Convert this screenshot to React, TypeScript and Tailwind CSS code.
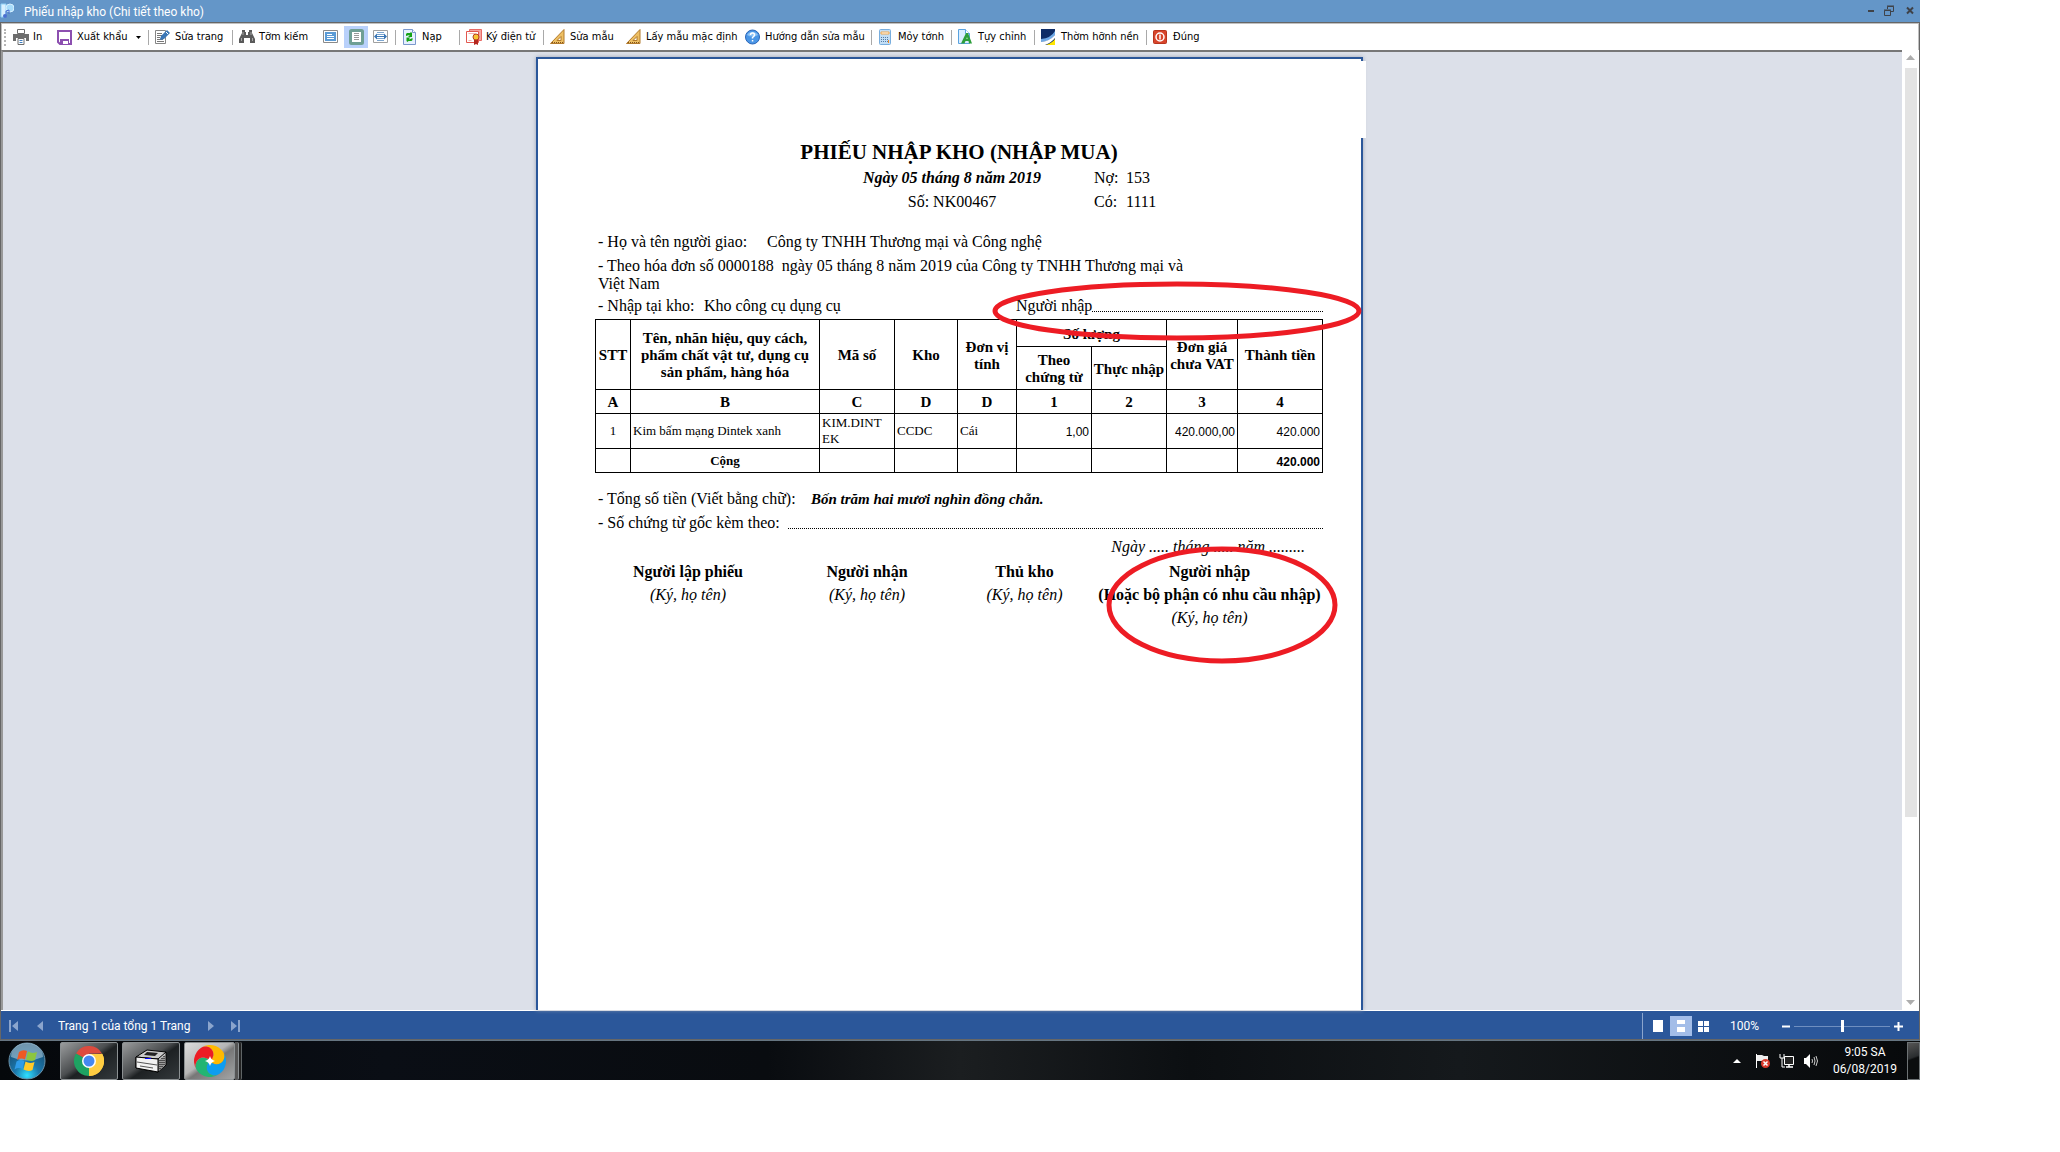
import type { ReactNode } from "react";
import clsx from "clsx";

const IconApp = () => (
	<svg width="14" height="16" viewBox="0 0 14 16">
		<path d="M1 1h5v13H1z" fill="#d9f0ff" stroke="#8fd0f5" />
		<circle cx="10" cy="5" r="4" fill="#a8dcfa" stroke="#d6f0ff" />
		<path d="M6 13V8l3-1v4" fill="none" stroke="#4a6fd0" />
		<circle cx="5" cy="13" r="2" fill="#4a6fd0" />
	</svg>
);

const IconPrint = () => (
	<svg width="16" height="16" viewBox="0 0 16 16">
		<path d="M4.500 .5h7v4h-7z" fill="#fff" stroke="#6d6d6d" />
		<path d="M0 5h16v7h-3V9H3v3H0z" fill="#6d6d6d" />
		<path d="M5 9.500h6v6H5z" fill="#fff" stroke="#6d6d6d" />
		<path d="M6.500 11.500h3M6.500 13.500h3" stroke="#3d7dbf" />
	</svg>
);

const IconSave = () => (
	<svg width="16" height="16" viewBox="0 0 16 16">
		<path d="M1 2h13v13H3l-2-2z" fill="#fff" stroke="#8c4fb0" strokeWidth="2" />
		<path d="M3 10h9v5H3z" fill="#8c4fb0" />
		<path d="M6 12h5v3H6z" fill="#fff" />
	</svg>
);

const IconEdit = () => (
	<svg width="16" height="16" viewBox="0 0 16 16">
		<path d="M.5 1.500h10v13H.5z" fill="#fff" stroke="#858585" />
		<path d="M2 4.500h5M2 6.500h5M2 8.500h3M2 10.500h6M2 12.500h7" stroke="#777" />
		<path d="M5 10l1-3 6-6 3 3-6 6-3 1z" fill="#3a76b5" />
		<path d="M11 3l2 2" stroke="#fff" />
	</svg>
);

const IconSearch = () => (
	<svg width="16" height="16" viewBox="0 0 16 16">
		<path d="M3 1h3v2h1v3h2V3h1V1h3v3l3 6v4h-5V9H5v5H0v-4l3-6z" fill="#5a5a5a" />
		<path d="M4 3v3M12 3v3M2.500 9v3M13.500 9v3" stroke="#a5a5a5" />
	</svg>
);

const IconPageWidth = () => (
	<svg width="15" height="14" viewBox="0 0 15 14">
		<path d="M.5.5h14v12H.5z" fill="#fff" stroke="#8a8a8a" />
		<path d="M2 2h11v9H2z" fill="#5b9bd5" />
		<path d="M4 4.500h5M4 6.500h7M4 8.500h7" stroke="#fff" />
	</svg>
);

const IconWholePage = () => (
	<svg width="15" height="16" viewBox="0 0 15 16">
		<rect x="1.500" y="1.500" width="12" height="13" rx="1" fill="#fff" stroke="#6f9f94" strokeWidth="3" />
		<path d="M5 4.500h5M5 6.500h5M5 8.500h5M5 10.500h5" stroke="#9a9a9a" />
	</svg>
);

const IconFitText = () => (
	<svg width="15" height="14" viewBox="0 0 15 14">
		<path d="M.5.5h14v12H.5z" fill="#fff" stroke="#a0a0a0" />
		<path d="M4 2.500h7M4 4.500h7M4 8.500h7M4 10.500h7" stroke="#7ba5d0" />
		<path d="M1 6.500l3-3v2.500h7V3.500l3 3-3 3V7H4v2.500z" fill="#3a76b5" />
	</svg>
);

const IconReload = () => (
	<svg width="16" height="16" viewBox="0 0 16 16">
		<path d="M1.500.5h9l3 3v12h-12z" fill="#e6f0ff" stroke="#7a98cc" />
		<path d="M10.500.5v3h3" fill="#fff" stroke="#7a98cc" />
		<path d="M4 7V5l1-1h3l1-1 1 1v4H6l1.500-1.500V6zM10.500 9v2l-1 1h-3l-1 1-1-1V8.500h4L7 10v.5z" fill="#16a316" />
	</svg>
);

const IconSign = () => (
	<svg width="16" height="16" viewBox="0 0 16 16">
		<path d="M3.500.5h12v11h-12z" fill="#f4a6a0" stroke="#e86a64" />
		<path d="M.5 2.500h12v11H.5z" fill="#fff" stroke="#e2574f" />
		<path d="M2.500 4.500h7M2.500 11.500h3" stroke="#f3b5b0" />
		<path d="M8 10h4v6l-2-1-2 1z" fill="#b3261e" />
		<circle cx="10" cy="8" r="3" fill="#f6c433" stroke="#b8401f" />
	</svg>
);

const IconRuler = () => (
	<svg width="16" height="16" viewBox="0 0 16 16">
		<path d="M14 .5V14.500H.5z" fill="#edbf63" stroke="#b27a2c" />
		<path d="M11 7.500v4H7z" fill="#fff" stroke="#b27a2c" />
		<path d="M2 13.500h11" stroke="#80521c" strokeDasharray="1 1" />
	</svg>
);

const IconHelp = () => (
	<svg width="16" height="16" viewBox="0 0 16 16">
		<circle cx="7.500" cy="8" r="7" fill="#4a96e6" stroke="#2b66b8" />
		<path d="M2 6a6 5 0 0 1 11 0q-6 3-11 0" fill="#8cc2f5" />
		<path d="M5.500 6q0-2 2-2t2 2q0 1-2 2.500v1" fill="none" stroke="#fff" strokeWidth="1.500" />
		<path d="M6.800 11h1.500v1.500H6.800z" fill="#fff" />
	</svg>
);

const IconCalculator = () => (
	<svg width="16" height="16" viewBox="0 0 16 16">
		<rect x="1.500" y=".5" width="11" height="15" rx="1" fill="#c3def5" stroke="#78aede" />
		<path d="M3 3h8v2H3z" fill="#fff" stroke="#f0a64a" />
		<path d="M3 8.500h8M3 10.500h8M3 12.500h8" stroke="#557da5" strokeDasharray="1 1" />
		<path d="M10 11h1v3h-1z" fill="#f08a24" />
	</svg>
);

const IconCustomize = () => (
	<svg width="16" height="16" viewBox="0 0 16 16">
		<path d="M.5.5h7l4 4v10H.5z" fill="#d9edff" stroke="#5aa3e0" />
		<path d="M7.500.5v4h4" fill="#fff" stroke="#5aa3e0" />
		<path d="M3 14.500L8 4h2l4 10.500h-3L10.500 12h-3l-1 2.500z" fill="#2c9e3a" />
		<path d="M8.500 10h1L9 8z" fill="#fff" />
	</svg>
);

const IconBackground = () => (
	<svg width="14" height="16" viewBox="0 0 14 16">
		<path d="M0 0h14v16H0z" fill="#0e2c66" />
		<path d="M0 10Q10 9 14 2v4Q9 13 0 13z" fill="#6fa9e6" />
		<path d="M0 13Q9 12 14 6v3Q10 14 4 16H0z" fill="#fff" />
		<path d="M5 16q6-2 9-6v6z" fill="#ffe600" />
	</svg>
);

const IconClose = () => (
	<svg width="14" height="16" viewBox="0 0 14 16">
		<rect x=".5" y="1.500" width="13" height="13" rx="1" fill="#d8452b" stroke="#b8341d" />
		<circle cx="7" cy="8" r="4" fill="none" stroke="#fff" strokeWidth="1.500" />
		<path d="M7 5.500v5" stroke="#fff" strokeWidth="1.500" />
	</svg>
);

type ToolButtonProps = {
	icon: ReactNode;
	title: string;
	className: string;
	iconOnly?: boolean;
};

const ToolButton: React.FC<ToolButtonProps> = ({ icon, title, className, iconOnly }) => (
	<button
		type="button"
		aria-label={title}
		className={clsx("flex h-[22px] shrink-0 items-center whitespace-nowrap", className)}
	>
		<span className={clsx("flex shrink-0", !iconOnly && "w-5")}>{icon}</span>
		{!iconOnly && title}
	</button>
);

const Separator = () => <span className="mr-1.5 h-[15px] w-px shrink-0 bg-[#a9a9a9]" />;

const TitleBar = () => (
	<header className="flex h-[22px] items-center bg-[#6496c8] text-white">
		<IconApp />
		<h1 className="ml-2.5 pt-0.5 font-['Roboto',sans-serif] text-[12px] leading-4">
			Phiếu nhập kho (Chi tiết theo kho)
		</h1>
		<div className="mr-1 ml-auto flex h-full items-center gap-2">
			<button type="button" aria-label="Minimize">
				<svg width="8" height="12" viewBox="0 0 8 12">
					<path d="M1 5h6v2H1z" fill="#3f4248" />
				</svg>
			</button>
			<button type="button" aria-label="Restore">
				<svg width="12" height="12" viewBox="0 0 12 12">
					<path d="M4.500 4V1.500h6v5H8M4 1h7" fill="none" stroke="#3f4248" />
					<path d="M1.500 5.500h6v5h-6zM1 5h7" fill="none" stroke="#3f4248" />
				</svg>
			</button>
			<button type="button" aria-label="Close" className="ml-0.5">
				<svg width="11" height="12" viewBox="0 0 11 12">
					<path d="M2 2.500l6 6M8 2.500l-6 6" stroke="#3f4248" strokeWidth="2" />
				</svg>
			</button>
		</div>
	</header>
);

const Toolbar = () => (
	<div
		role="toolbar"
		className="flex h-[27px] items-center border-x border-t border-[#c0c0c0] bg-white font-['DejaVu_Sans_Condensed','DejaVu_Sans',sans-serif] text-[11px] text-black"
	>
		<span className="mr-[7px] ml-[2px] h-[17px] shrink-0 border-l-2 border-dotted border-[#b5b5b5]" />
		<ToolButton icon={<IconPrint />} title="In" className="w-11" />
		<ToolButton icon={<IconSave />} title="Xuất khẩu" className="w-[79px]" />
		<button type="button" aria-label="Xuất khẩu: tùy chọn" className="w-3">
			<svg width="5" height="3" viewBox="0 0 5 3">
				<path d="M0 0h5L2.500 3z" fill="#000" />
			</svg>
		</button>
		<Separator />
		<ToolButton icon={<IconEdit />} title="Sửa trang" className="w-[77px]" />
		<Separator />
		<ToolButton icon={<IconSearch />} title="Tỡm kiếm" className="w-[84px]" />
		<ToolButton icon={<IconPageWidth />} title="Vừa chiều rộng" className="w-[21px]" iconOnly />
		<ToolButton
			icon={<IconWholePage />}
			title="Toàn trang"
			className="w-6 justify-center bg-[#b9d1fb]"
			iconOnly
		/>
		<ToolButton icon={<IconFitText />} title="Vừa nội dung" className="w-[27px] pl-[5px]" iconOnly />
		<Separator />
		<ToolButton icon={<IconReload />} title="Nạp" className="w-[57px]" />
		<Separator />
		<ToolButton icon={<IconSign />} title="Ký điện tử" className="w-[77px]" />
		<Separator />
		<ToolButton icon={<IconRuler />} title="Sửa mẫu" className="w-[76px]" />
		<ToolButton icon={<IconRuler />} title="Lấy mẫu mặc định" className="w-[119px]" />
		<ToolButton icon={<IconHelp />} title="Hướng dẫn sửa mẫu" className="w-[126px]" />
		<Separator />
		<ToolButton icon={<IconCalculator />} title="Mỏy tớnh" className="w-[73px]" />
		<Separator />
		<ToolButton icon={<IconCustomize />} title="Tựy chỉnh" className="w-[76px]" />
		<Separator />
		<ToolButton icon={<IconBackground />} title="Thờm hỡnh nền" className="w-[105px]" />
		<Separator />
		<ToolButton icon={<IconClose />} title="Đúng" className="w-[50px]" />
	</div>
);

const Th: React.FC<React.ComponentProps<"th">> = ({ children, ...rest }) => (
	<th className="border border-black px-0 pt-0.5 pb-0 text-center align-middle font-bold" {...rest}>
		{children}
	</th>
);

const Td: React.FC<{ children?: ReactNode; className?: string }> = ({ children, className }) => (
	<td className={clsx("border border-black px-[2px] py-0", className)}>{children}</td>
);

const AmountCell: React.FC<{ value: string }> = ({ value }) => (
	<Td className="pt-0.5 text-right font-['Liberation_Sans',sans-serif] text-[12px]">{value}</Td>
);

const ReceiptTable = () => (
	<table className="mt-px w-full table-fixed border-collapse text-[15px] leading-[17px]">
		<colgroup>
			<col className="w-[35px]" />
			<col className="w-[189px]" />
			<col className="w-[75px]" />
			<col className="w-[63px]" />
			<col className="w-[59px]" />
			<col className="w-[75px]" />
			<col className="w-[75px]" />
			<col className="w-[71px]" />
			<col />
		</colgroup>
		<thead>
			<tr className="h-[27px]">
				<Th rowSpan={2}>STT</Th>
				<Th rowSpan={2}>
					Tên, nhãn hiệu, quy cách,
					<br />
					phẩm chất vật tư, dụng cụ
					<br />
					sản phẩm, hàng hóa
				</Th>
				<Th rowSpan={2}>Mã số</Th>
				<Th rowSpan={2}>Kho</Th>
				<Th rowSpan={2}>Đơn vị tính</Th>
				<Th colSpan={2}>Số lượng</Th>
				<Th rowSpan={2}>
					Đơn giá
					<br />
					chưa VAT
				</Th>
				<Th rowSpan={2}>Thành tiền</Th>
			</tr>
			<tr className="h-[43px]">
				<Th>
					Theo
					<br />
					chứng từ
				</Th>
				<Th>Thực nhập</Th>
			</tr>
			<tr className="h-6">
				{["A", "B", "C", "D", "D", "1", "2", "3", "4"].map((label, index) => (
					<Th key={index}>{label}</Th>
				))}
			</tr>
		</thead>
		<tbody className="text-[13px] leading-4">
			<tr className="h-[35px]">
				<Td className="text-center">1</Td>
				<Td>Kim bấm mạng Dintek xanh</Td>
				<Td>
					KIM.DINT
					<br />
					EK
				</Td>
				<Td>CCDC</Td>
				<Td>Cái</Td>
				<AmountCell value="1,00" />
				<Td />
				<AmountCell value="420.000,00" />
				<AmountCell value="420.000" />
			</tr>
			<tr className="h-6 font-bold">
				<Td />
				<Td className="text-center">Cộng</Td>
				<Td />
				<Td />
				<Td />
				<Td />
				<Td />
				<Td />
				<AmountCell value="420.000" />
			</tr>
		</tbody>
	</table>
);

const Signature: React.FC<{ title: string; note?: string }> = ({ title, note }) => (
	<div className="text-center leading-[23px] whitespace-nowrap">
		<p className="font-bold">{title}</p>
		{note && <p className="font-bold">{note}</p>}
		<p className="italic">(Ký, họ tên)</p>
	</div>
);

const Receipt = () => (
	<article className="relative mx-auto mt-[5px] w-[827px] border-2 border-b-0 border-[#2b579a] bg-white pr-[38px] pl-[57px] font-['Liberation_Serif',serif] text-[16px] leading-6 text-black shadow-[0_0_4px_#9aa3b5]">
		<div className="absolute top-[2px] -right-[5px] h-[77px] w-5 bg-white" />
		<h2 className="pt-20 text-center text-[21px] leading-[27px] font-bold">PHIẾU NHẬP KHO (NHẬP MUA)</h2>
		<div className="grid grid-cols-[215px_284px_32px_1fr]">
			<p className="col-start-2 text-center font-bold italic">Ngày 05 tháng 8 năm 2019</p>
			<p>Nợ:</p>
			<p>153</p>
			<p className="col-start-2 text-center">Số: NK00467</p>
			<p>Có:</p>
			<p>1111</p>
		</div>
		<div className="mt-4 flex pl-[3px]">
			<p className="w-[169px]">- Họ và tên người giao:</p>
			<p>Công ty TNHH Thương mại và Công nghệ</p>
		</div>
		<p className="pt-[3px] pb-px pl-[3px] leading-[18px] whitespace-pre">
			{"- Theo hóa đơn số 0000188  ngày 05 tháng 8 năm 2019 của Công ty TNHH Thương mại và\nViệt Nam"}
		</p>
		<div className="flex pl-[3px]">
			<p className="w-[106px]">- Nhập tại kho:</p>
			<p className="w-[312px]">Kho công cụ dụng cụ</p>
			<p>Người nhập</p>
			<span className="mb-[6px] flex-1 border-b border-dotted border-black" />
		</div>
		<ReceiptTable />
		<div className="mt-3.5 flex pl-[3px]">
			<p className="w-[213px]">- Tổng số tiền (Viết bằng chữ):</p>
			<p className="text-[15px] font-bold italic">Bốn trăm hai mươi nghìn đồng chẵn.</p>
		</div>
		<div className="flex pl-[3px]">
			<p className="w-[190px]">- Số chứng từ gốc kèm theo:</p>
			<span className="mb-[6px] flex-1 border-b border-dotted border-black" />
		</div>
		<p className="pr-[18px] text-right italic">Ngày ..... tháng ..... năm .........</p>
		<div className="mt-px grid grid-cols-[186px_172px_143px_227px]">
			<Signature title="Người lập phiếu" />
			<Signature title="Người nhận" />
			<Signature title="Thủ kho" />
			<Signature title="Người nhập" note="(Hoặc bộ phận có nhu cầu nhập)" />
		</div>
		<svg className="absolute top-[220px] left-[450px]" width="380" height="400" fill="none" stroke="#ed1c24" strokeWidth="5">
			<ellipse cx="189" cy="32" rx="182" ry="27" />
			<ellipse cx="234" cy="326" rx="113" ry="56" />
		</svg>
	</article>
);

const ScrollBar = () => (
	<div className="flex w-[17px] shrink-0 flex-col items-center bg-white">
		<svg className="mt-[5px]" width="9" height="5" viewBox="0 0 9 5">
			<path d="M4.500 0L9 5H0z" fill="#adadad" />
		</svg>
		<div className="mt-2 mb-[183px] w-3 flex-1 bg-[#e3e3e3]" />
		<svg className="mb-[5px]" width="9" height="5" viewBox="0 0 9 5">
			<path d="M0 0h9L4.500 5z" fill="#adadad" />
		</svg>
	</div>
);

const StatusBar = () => (
	<footer className="flex h-7 items-center bg-[#2b579a] pt-0.5 pr-4 pl-2 font-['Roboto',sans-serif] text-[12px] leading-4 text-white">
		<button type="button" aria-label="Trang đầu" className="w-7">
			<svg width="9" height="12" viewBox="0 0 9 12">
				<path d="M0 0h2v12H0zM9 1v10L3 6z" fill="#8ba5cd" />
			</svg>
		</button>
		<button type="button" aria-label="Trang trước" className="w-[21px]">
			<svg width="6" height="12" viewBox="0 0 6 12">
				<path d="M6 1v10L0 6z" fill="#8ba5cd" />
			</svg>
		</button>
		<p className="w-[150px] whitespace-nowrap">Trang 1 của tổng 1 Trang</p>
		<button type="button" aria-label="Trang sau" className="w-[23px]">
			<svg width="6" height="12" viewBox="0 0 6 12">
				<path d="M0 1v10l6-5z" fill="#8ba5cd" />
			</svg>
		</button>
		<button type="button" aria-label="Trang cuối">
			<svg width="9" height="12" viewBox="0 0 9 12">
				<path d="M7 0h2v12H7zM0 1v10l6-5z" fill="#8ba5cd" />
			</svg>
		</button>
		<span className="ml-auto h-[26px] w-px bg-[#8ba5cd]" />
		<button type="button" aria-label="Một trang" className="ml-2.5 w-[17px]">
			<svg width="10" height="12" viewBox="0 0 10 12">
				<path d="M0 0h10v12H0z" fill="#fff" />
			</svg>
		</button>
		<button type="button" aria-label="Liên tục" className="flex h-5 w-[22px] items-center justify-center bg-[#a3bde8]">
			<svg width="8" height="12" viewBox="0 0 8 12">
				<path d="M0 0h8v4H0zM0 7h8v5H0z" fill="#fff" />
			</svg>
		</button>
		<button type="button" aria-label="Nhiều trang" className="ml-1.5 w-8">
			<svg width="11" height="11" viewBox="0 0 11 11">
				<path d="M0 0h5v5H0zM6 0h5v5H6zM0 6h5v5H0zM6 6h5v5H6z" fill="#fff" />
			</svg>
		</button>
		<span className="w-[52px]">100%</span>
		<button type="button" aria-label="Thu nhỏ">
			<svg width="8" height="9" viewBox="0 0 8 9">
				<path d="M0 3.500h8v2H0z" fill="#fff" />
			</svg>
		</button>
		<input
			type="range"
			aria-label="Thu phóng"
			defaultValue={50}
			className="mx-1 h-3 w-24 appearance-none bg-[linear-gradient(#6f8fc0,#6f8fc0)] bg-[length:100%_1px] bg-center bg-no-repeat [&::-webkit-slider-thumb]:h-3 [&::-webkit-slider-thumb]:w-[3px] [&::-webkit-slider-thumb]:appearance-none [&::-webkit-slider-thumb]:bg-white"
		/>
		<button type="button" aria-label="Phóng to">
			<svg width="9" height="9" viewBox="0 0 9 9">
				<path d="M0 3.500h3.500V0h2v3.500H9v2H5.500V9h-2V5.500H0z" fill="#fff" />
			</svg>
		</button>
	</footer>
);

const IconWindows = () => (
	<svg width="38" height="38" viewBox="0 0 38 38">
		<defs>
			<radialGradient id="orb" cx="50%" cy="90%" r="85%">
				<stop offset="0" stopColor="#2fe0ff" />
				<stop offset=".4" stopColor="#1b78ac" />
				<stop offset="1" stopColor="#174a6e" />
			</radialGradient>
		</defs>
		<circle cx="19" cy="19" r="18" fill="url(#orb)" stroke="#6b93ab" />
		<path d="M3 15a16 14 0 0 1 32 0q-16 7-32 0" fill="#b9d6e4" opacity=".55" />
		<path d="M11 10q4-3 8-1l-2 8.500q-4-2-8 .5z" fill="#ee5a24" />
		<path d="M20 9.500q4 2.500 9 .5l-2 8q-4 2-9-.5z" fill="#8cc63f" />
		<path d="M8.500 19.500q4-2.500 8-.5l-2 8q-4-2-8 .5z" fill="#2f9ce8" />
		<path d="M17.500 19.500q4 2.500 9 .5l-2 8q-4 2-9-.5z" fill="#ffca28" />
	</svg>
);

const IconChrome = () => (
	<svg width="30" height="30" viewBox="0 0 30 30">
		<path d="M15 15L2 7.500A15 15 0 0 1 28 7.500H15z" fill="#dd4b3e" />
		<path d="M15 15L28 7.500A15 15 0 0 1 15 30z" fill="#ffcd42" />
		<path d="M15 15v15A15 15 0 0 1 2 7.500z" fill="#1ea362" />
		<path d="M15 8h13.300a15 15 0 0 1-13.300 22l6.500-11.500z" fill="#ffcd42" />
		<circle cx="15" cy="15" r="7" fill="#fff" />
		<circle cx="15" cy="15" r="5.500" fill="#4688f1" />
	</svg>
);

const IconPrinterDevice = () => (
	<svg width="32" height="24" viewBox="0 0 32 24">
		<path d="M1 8L12 1l19 2v13l-8 7-22-4z" fill="#c9c9c9" stroke="#000" />
		<path d="M1 8l22 2 8-7M23 10v13" fill="none" stroke="#000" />
		<path d="M1 8l22 2v13L1 19z" fill="#f2f2f2" stroke="#000" />
		<path d="M12 3l11 1-3 3-11-1z" fill="#222" />
		<path d="M24 11l6-5v10l-6 6z" fill="#9b9b9b" />
		<path d="M25 20V11M27 18V9M29 16V7" stroke="#000" strokeDasharray="1 1" />
		<path d="M2 13l20 3M5 17l13 2" stroke="#555" />
		<path d="M10 9h6v1h-6z" fill="#00f" />
	</svg>
);

const IconPinwheel = () => (
	<svg width="32" height="32" viewBox="0 0 32 32">
		<g transform="rotate(-35 16 16)">
			<path d="M16 16A8 8 0 0 0 16 0A16 16 0 0 1 32 16A8 8 0 0 1 16 16z" fill="#ffb900" />
			<path d="M16 16A8 8 0 0 0 32 16A16 16 0 0 1 16 32A8 8 0 0 1 16 16z" fill="#0d9df0" />
			<path d="M16 16A8 8 0 0 0 16 32A16 16 0 0 1 0 16A8 8 0 0 1 16 16z" fill="#22b573" />
			<path d="M16 16A8 8 0 0 0 0 16A16 16 0 0 1 16 0A8 8 0 0 1 16 16z" fill="#ec1c24" />
		</g>
		<path d="M16 11q1 4 5 5-4 1-5 5-1-4-5-5 4-1 5-5z" fill="#fff" />
	</svg>
);

const TaskButton: React.FC<{ title: string; icon: ReactNode; className: string }> = ({ title, icon, className }) => (
	<button
		type="button"
		aria-label={title}
		className={clsx("flex h-[38px] items-center justify-center rounded-[2px] border border-[#8b9092]", className)}
	>
		{icon}
	</button>
);

const TaskBar = () => (
	<nav className="flex h-10 items-center border-t border-[#667581] bg-[linear-gradient(90deg,#05080b,#0a0e15_20%,#090c10_40%,#1b1e20_50%,#0c0f12_62%,#15191c_76%,#07090b)] font-['Roboto',sans-serif] text-[12px] leading-[17px] text-white">
		<button type="button" aria-label="Start" className="mr-3.5 ml-2">
			<IconWindows />
		</button>
		<TaskButton
			title="Chrome"
			icon={<IconChrome />}
			className="mr-1 w-[58px] bg-[linear-gradient(145deg,#9a9c9d,#4b4e50_45%,#1d2123_55%,#33383b)]"
		/>
		<TaskButton
			title="Máy in"
			icon={<IconPrinterDevice />}
			className="mr-1 w-[58px] bg-[linear-gradient(145deg,#9a9c9d,#4b4e50_45%,#1d2123_55%,#33383b)]"
		/>
		<TaskButton
			title="Phần mềm kế toán"
			icon={<IconPinwheel />}
			className="w-[51px] bg-[linear-gradient(145deg,#dcdcdc,#b5b5b5_45%,#777_55%,#a3a5a6)]"
		/>
		<span className="h-[38px] w-1 rounded-r-[2px] border-r border-[#8b9092] bg-[#555]" />
		<span className="h-[38px] w-[3px] rounded-r-[2px] border-r border-[#5f6466] bg-[#222]" />
		<div className="ml-auto flex h-full items-center">
			<button type="button" aria-label="Biểu tượng ẩn" className="mr-3.5">
				<svg width="8" height="4" viewBox="0 0 8 4">
					<path d="M4 0l4 4H0z" fill="#fff" />
				</svg>
			</button>
			<svg className="mr-2" width="16" height="16" viewBox="0 0 16 16">
				<path d="M1.500 1v14" stroke="#fff" />
				<path d="M2 2h5l2 1h4v6H8L7 8H2z" fill="#eee" />
				<circle cx="10.500" cy="10.500" r="4.500" fill="#dc3a2c" />
				<path d="M8.500 8.500l4 4M12.500 8.500l-4 4" stroke="#fff" strokeWidth="1.500" />
			</svg>
			<svg className="mr-2" width="16" height="16" viewBox="0 0 16 16">
				<path d="M5.500 3.500h9v8h-9z" fill="#222" stroke="#fff" />
				<path d="M7 14h7M10 12v2" stroke="#fff" strokeWidth="1.500" />
				<path d="M1 1v4h4V1M3 5v9h3" fill="none" stroke="#fff" />
			</svg>
			<svg width="16" height="16" viewBox="0 0 16 16">
				<path d="M1 5h2l4-4v14l-4-4H1z" fill="#fff" />
				<path d="M9 6q1 2 0 4M11 4q2 4 0 8M13 3q3 5 0 10" fill="none" stroke="#ccc" />
			</svg>
			<p className="w-[88px] pl-1 text-center">
				9:05 SA
				<br />
				06/08/2019
			</p>
			<button
				type="button"
				aria-label="Hiện màn hình nền"
				className="h-[38px] w-[13px] border border-[#6d7274] bg-[linear-gradient(160deg,#555,#2a2d2f_40%,#0b0d0e_45%)]"
			/>
		</div>
	</nav>
);

export default function App() {
	return (
		<div className="flex min-h-screen flex-col bg-white pr-[140px] pb-[72px]">
			<TitleBar />
			<main className="flex flex-1 flex-col border-x border-y border-[#666]">
				<Toolbar />
				<div className="flex flex-1 border-b border-white">
					<div className="flex flex-1 border-t-2 border-l-2 border-t-[#777] border-l-[#999] bg-[#dce0e9] pr-1.5">
						<Receipt />
					</div>
					<ScrollBar />
				</div>
				<StatusBar />
			</main>
			<TaskBar />
		</div>
	);
}
